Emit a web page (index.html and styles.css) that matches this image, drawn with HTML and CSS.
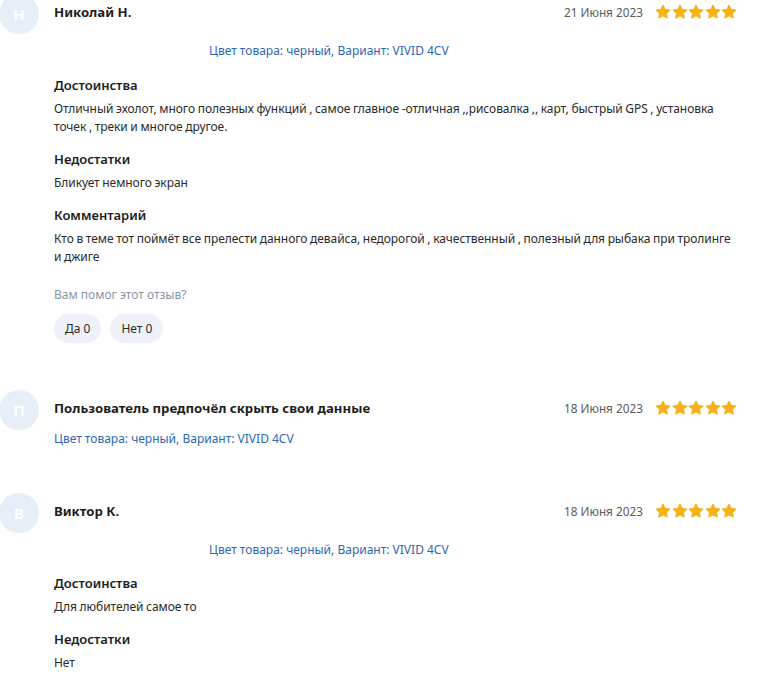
FILE: index.html
```html
<!DOCTYPE html>
<html lang="ru">
<head>
<meta charset="utf-8">
<title>Отзывы</title>
<link rel="stylesheet" href="styles.css">
</head>
<body>
<svg width="0" height="0" class="defs" aria-hidden="true">
  <defs>
    <symbol id="star" viewBox="0 0 24 24">
      <path d="M12 1.8l3.1 6.4 7 .9-5.1 4.9 1.3 7L12 17.6l-6.3 3.4 1.3-7-5.1-4.9 7-.9z" fill="#f6b318" stroke="#f6b318" stroke-width="1.8" stroke-linejoin="round"/>
    </symbol>
  </defs>
</svg>
<div class="reviews">
  <article class="review review--first">
    <div class="avatar">Н</div>
    <div class="content">
      <header class="head">
        <span class="name">Николай Н.</span>
        <span class="date">21 Июня 2023</span>
        <span class="stars"><svg><use href="#star"/></svg><svg><use href="#star"/></svg><svg><use href="#star"/></svg><svg><use href="#star"/></svg><svg><use href="#star"/></svg></span>
      </header>
      <div class="meta meta--photos"><div class="photos"></div><span class="variant">Цвет товара: черный, Вариант: VIVID 4CV</span></div>
      <section class="part part--lead">
        <h3 class="part-title">Достоинства</h3>
        <p class="part-text">Отличный эхолот, много полезных функций , самое главное -отличная ,,рисовалка ,, карт, быстрый GPS , установка точек , треки и многое другое.</p>
      </section>
      <section class="part">
        <h3 class="part-title">Недостатки</h3>
        <p class="part-text">Бликует немного экран</p>
      </section>
      <section class="part">
        <h3 class="part-title">Комментарий</h3>
        <p class="part-text">Кто в теме тот поймёт все прелести данного девайса, недорогой , качественный , полезный для рыбака при тролинге и джиге</p>
      </section>
      <div class="helpful">
        <p class="helpful-q">Вам помог этот отзыв?</p>
        <div class="votes">
          <button class="vote">Да 0</button>
          <button class="vote">Нет 0</button>
        </div>
      </div>
    </div>
  </article>

  <article class="review review--second">
    <div class="avatar">П</div>
    <div class="content">
      <header class="head">
        <span class="name">Пользователь предпочёл скрыть свои данные</span>
        <span class="date">18 Июня 2023</span>
        <span class="stars"><svg><use href="#star"/></svg><svg><use href="#star"/></svg><svg><use href="#star"/></svg><svg><use href="#star"/></svg><svg><use href="#star"/></svg></span>
      </header>
      <div class="meta meta--plain"><span class="variant">Цвет товара: черный, Вариант: VIVID 4CV</span></div>
    </div>
  </article>

  <article class="review review--third">
    <div class="avatar">В</div>
    <div class="content">
      <header class="head">
        <span class="name">Виктор К.</span>
        <span class="date">18 Июня 2023</span>
        <span class="stars"><svg><use href="#star"/></svg><svg><use href="#star"/></svg><svg><use href="#star"/></svg><svg><use href="#star"/></svg><svg><use href="#star"/></svg></span>
      </header>
      <div class="meta meta--photos meta--low"><div class="photos"></div><span class="variant">Цвет товара: черный, Вариант: VIVID 4CV</span></div>
      <section class="part part--lead">
        <h3 class="part-title">Достоинства</h3>
        <p class="part-text">Для любителей самое то</p>
      </section>
      <section class="part">
        <h3 class="part-title">Недостатки</h3>
        <p class="part-text">Нет</p>
      </section>
    </div>
  </article>
</div>
</body>
</html>
```

FILE: styles.css
```css
* { box-sizing: border-box; }

html, body {
  margin: 0;
  padding: 0;
  background: #ffffff;
  overflow: hidden;
}

body {
  font-family: "Noto Sans", "Liberation Sans", sans-serif;
  color: #262626;
  width: 768px;
  height: 688px;
}

.defs { position: absolute; }

.reviews {
  display: flex;
  flex-direction: column;
  margin-top: -6px;
  padding-right: 31px;
}

.review {
  display: flex;
  align-items: flex-start;
  gap: 15px;
}

.review--second { margin-top: 47px; }
.review--third { margin-top: 45px; }

.avatar {
  flex: 0 0 40px;
  width: 40px;
  height: 40px;
  margin-left: -1px;
  border-radius: 50%;
  background: #e8eef8;
  color: #ffffff;
  font-size: 15px;
  font-weight: 700;
  display: flex;
  align-items: center;
  justify-content: center;
}

.content {
  flex: 1;
  min-width: 0;
}

.head {
  height: 36px;
  display: flex;
  align-items: center;
}

.name {
  flex: 1;
  font-size: 13.2px;
  font-weight: 700;
  color: #1e1e1e;
}

.date {
  font-size: 11.8px;
  color: #5c5c5c;
  margin-right: 12px;
}

.stars {
  display: flex;
  gap: 0.5px;
}

.stars svg {
  width: 16px;
  height: 16px;
  display: block;
}

.meta {
  display: flex;
  align-items: center;
  height: 18px;
}

.meta--plain { margin-top: 4px; }
.meta--photos { margin-top: 12px; }
.meta--low { margin-top: 12px; }

.photos {
  width: 155px;
  height: 18px;
}

.variant {
  font-size: 12px;
  color: #2c68b3;
  line-height: 18px;
}

.part { margin-top: 14px; }
.part--lead { margin-top: 16px; }
.review--third .part--lead { margin-top: 15px; }

.part-title {
  margin: 0 0 6px;
  font-size: 13px;
  line-height: 18px;
  font-weight: 600;
  color: #1e1e1e;
}

.part-text {
  margin: 0;
  font-size: 12px;
  line-height: 18px;
  letter-spacing: -0.06px;
  word-spacing: -0.4px;
  color: #2a2a2a;
}

.helpful { margin-top: 20px; }

.helpful-q {
  margin: 0;
  font-size: 12px;
  line-height: 18px;
  color: #8796a8;
}

.votes {
  display: flex;
  gap: 9px;
  margin-top: 10px;
}

.vote {
  height: 29px;
  padding: 0 11px;
  border: 0;
  border-radius: 15px;
  background: #eef2f8;
  font-family: inherit;
  font-size: 12px;
  color: #2a2a2a;
}
```
